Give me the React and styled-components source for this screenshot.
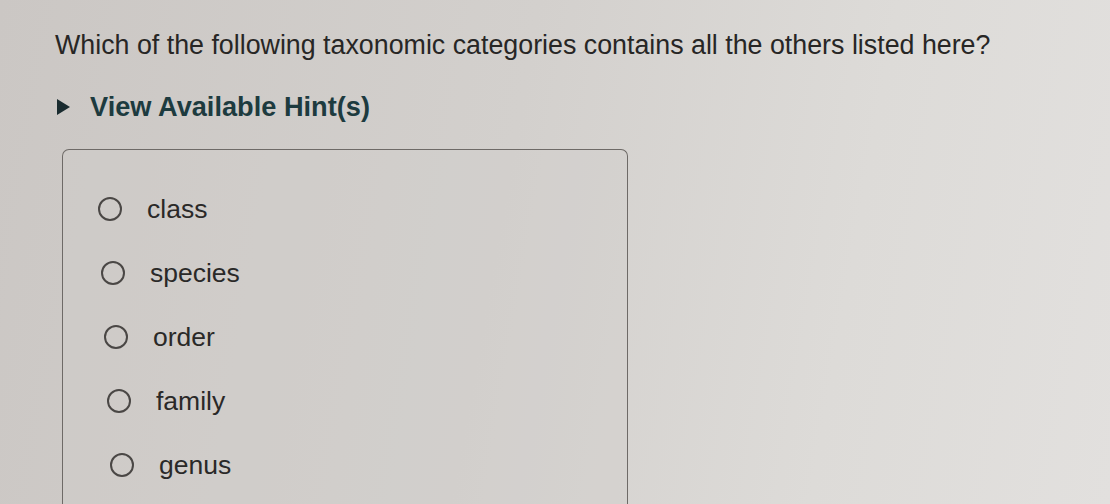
import React from 'react';
import styled, { createGlobalStyle } from 'styled-components';

const GlobalStyle = createGlobalStyle`
    html, body {
        margin: 0;
        padding: 0;
    }
    body {
        width: 1110px;
        height: 504px;
        overflow: hidden;
        font-family: 'Liberation Sans', Arial, sans-serif;
        background: linear-gradient(100deg, #cbc7c4 0%, #d3d0cd 45%, #dddbd8 75%, #e2e0de 100%);
    }
`;

const Page = styled.div`
    padding: 29px 0 0 55px;
    color: #272625;
`;

const Question = styled.p`
    margin: 0;
    font-size: 26.8px;
    line-height: 33px;
`;

const Hint = styled.button`
    display: flex;
    align-items: center;
    gap: 20px;
    margin: 29px 0 0 2px;
    padding: 0;
    border: none;
    background: none;
    font-family: inherit;
    font-size: 27.2px;
    font-weight: bold;
    color: #1d3b3f;
    cursor: pointer;
`;

const Arrow = styled.span`
    width: 0;
    height: 0;
    border-top: 8px solid transparent;
    border-bottom: 8px solid transparent;
    border-left: 13px solid #1a2c30;
`;

const OptionsBox = styled.div`
    margin: 26px 0 0 7px;
    width: 566px;
    height: 356px;
    border: 1.5px solid #6e6a67;
    border-bottom: none;
    border-radius: 7px 7px 0 0;
    padding-top: 27px;
    box-sizing: border-box;
    background: rgba(210, 206, 203, 0.35);
`;

const Option = styled.label`
    display: flex;
    align-items: center;
    gap: 25px;
    height: 64px;
    padding-left: ${p => 35 + p.shift}px;
    font-size: 26.5px;
    color: #2a2928;
    cursor: pointer;
`;

const Radio = styled.span`
    width: 20px;
    height: 20px;
    border: 2px solid #4a4745;
    border-radius: 50%;
    flex: none;
`;

const options = ['class', 'species', 'order', 'family', 'genus'];

const App = () => {
    return (
        <Page>
            <GlobalStyle />
            <Question>Which of the following taxonomic categories contains all the others listed here?</Question>
            <Hint>
                <Arrow />
                View Available Hint(s)
            </Hint>
            <OptionsBox>
                {options.map((opt, i) => (
                    <Option key={opt} shift={i * 3}>
                        <Radio />
                        {opt}
                    </Option>
                ))}
            </OptionsBox>
        </Page>
    );
};

export default App;
